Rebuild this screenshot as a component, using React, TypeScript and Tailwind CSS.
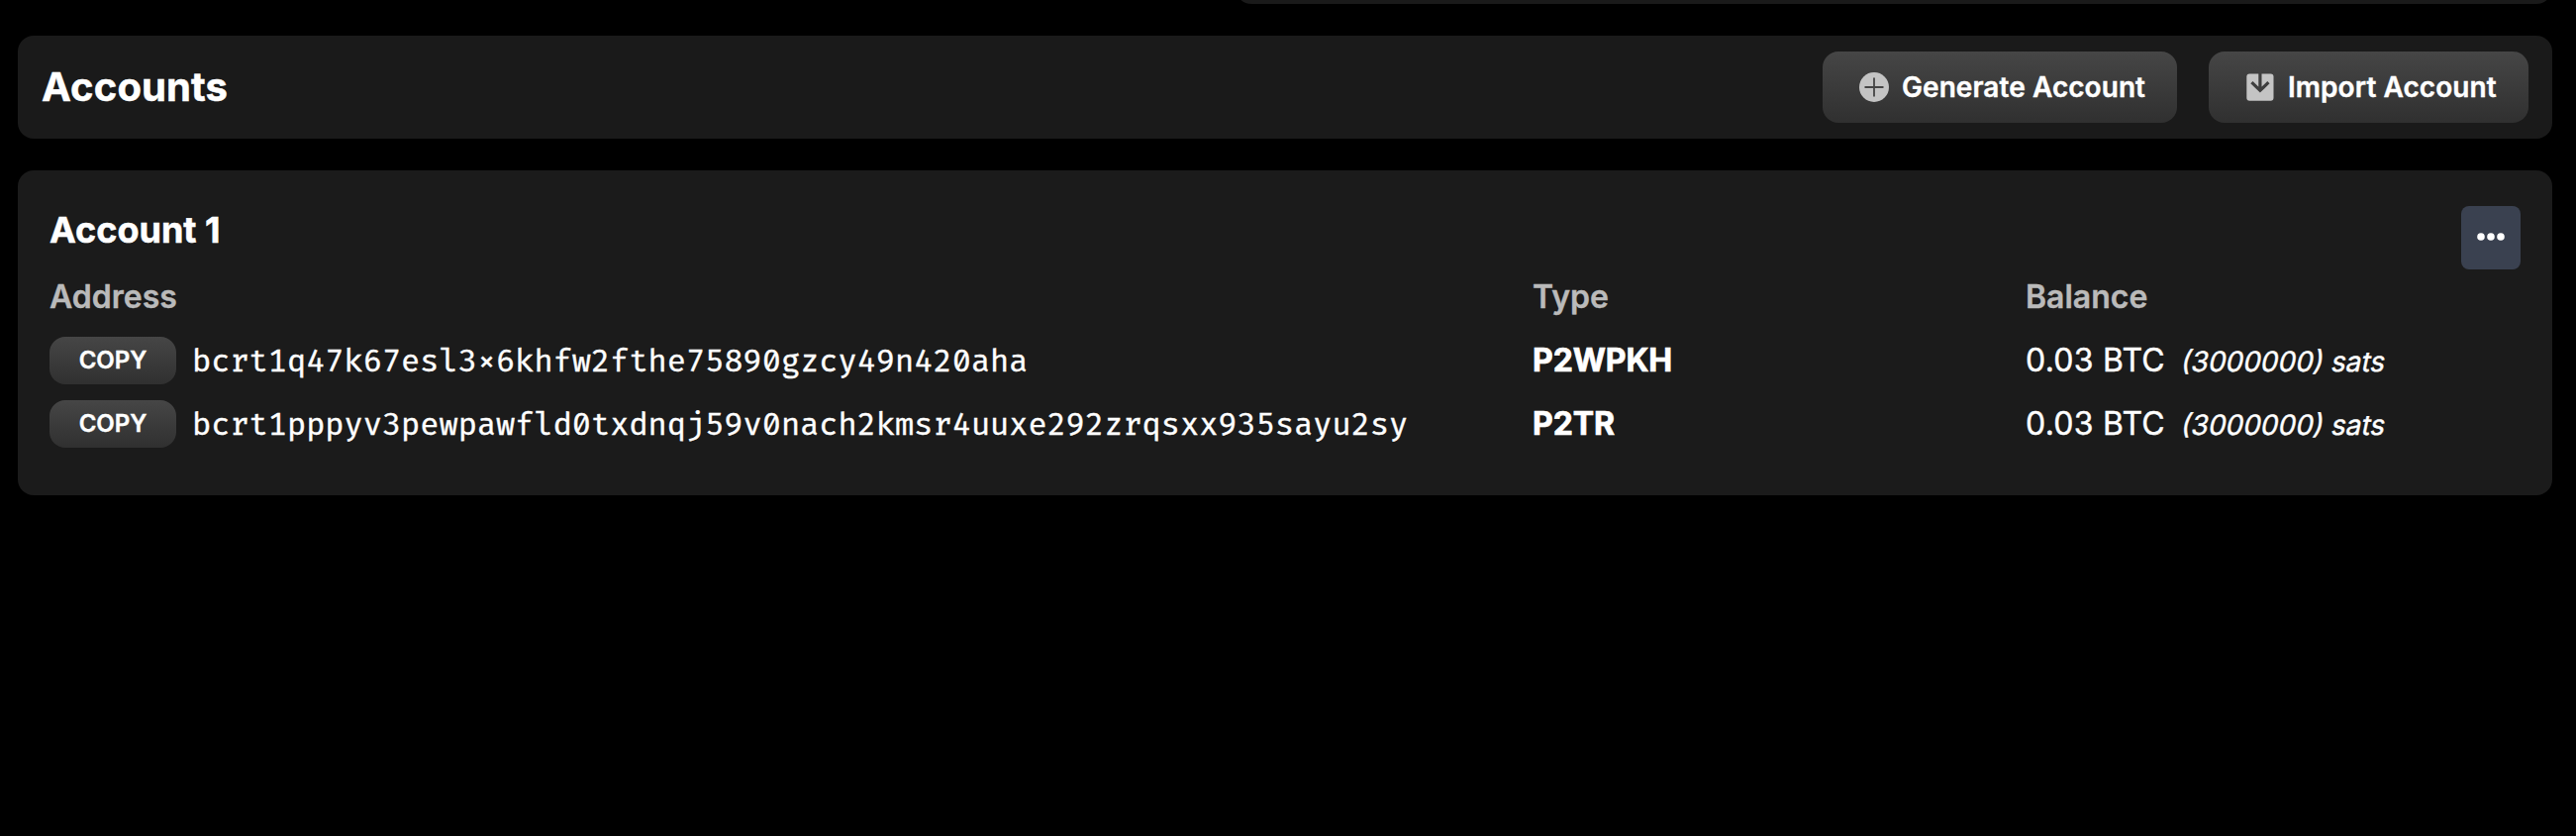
import React from "react";

const rows = [
  { address: "bcrt1q47k67esl3×6khfw2fthe75890gzcy49n420aha", type: "P2WPKH" },
  { address: "bcrt1pppyv3pewpawfld0txdnqj59v0nach2kmsr4uuxe292zrqsxx935sayu2sy", type: "P2TR" },
];

function PlusIcon() {
  return (
    <svg className="h-[30px] w-[30px] shrink-0" viewBox="0 0 30 30">
      <circle cx="15" cy="15" r="15" fill="#c4c4c4" />
      <path d="M15 5.5v19M5.5 15h19" stroke="#454545" strokeWidth="1.8" fill="none" />
    </svg>
  );
}

function ImportIcon() {
  return (
    <svg className="h-7 w-7 shrink-0" viewBox="0 0 28 28">
      <rect x="0.3" y="0.5" width="27.2" height="27.2" rx="3" fill="#c4c4c4" />
      <path d="M13.9 0v17M5.4 9.2l8.5 8.2l8.5-8.2" stroke="#3e3e3e" strokeWidth="3.2" fill="none" />
    </svg>
  );
}

export default function App() {
  return (
    <div className="flex h-[844px] w-[2602px] flex-col overflow-hidden bg-black pl-[18px] pr-6 font-['Inter',sans-serif] text-white">
      <div className="ml-[1230px] h-1 shrink-0 overflow-hidden">
        <div className="-mt-12 h-[52px] rounded-2xl bg-[#1a1a1a]" />
      </div>

      <header className="mt-8 flex h-[104px] shrink-0 items-center justify-between rounded-2xl bg-[#1a1a1a] px-6">
        <h1 className="text-[40px] font-bold leading-[56px] tracking-[0.003em] [-webkit-text-stroke:0.5px_#fff]">Accounts</h1>
        <div className="flex gap-8">
          <button className="flex h-[72px] w-[358px] items-center rounded-2xl bg-linear-to-b from-[#464646] to-[#303030] pl-[37px] text-[28px] font-semibold [-webkit-text-stroke:0.4px_#fff]">
            <PlusIcon />
            <span className="ml-[13px] whitespace-nowrap tracking-[0.002em]">Generate Account</span>
          </button>
          <button className="flex h-[72px] w-[323px] items-center rounded-2xl bg-linear-to-b from-[#464646] to-[#303030] pl-[38px] text-[28px] font-semibold [-webkit-text-stroke:0.4px_#fff]">
            <ImportIcon />
            <span className="ml-[14px] whitespace-nowrap tracking-[0.002em]">Import Account</span>
          </button>
        </div>
      </header>

      <section className="mt-8 flex h-[328px] shrink-0 flex-col rounded-2xl bg-[#1b1b1b] px-8 pt-9">
        <div className="flex h-16 justify-between">
          <h2 className="text-4xl font-bold leading-[48px] [-webkit-text-stroke:0.5px_#fff]">Account 1</h2>
          <button className="flex h-16 w-[60px] items-center justify-center rounded-lg bg-[#3a4150]">
            <svg className="-mt-0.5 h-2 w-7" viewBox="0 0 28 8">
              <circle cx="4" cy="4" r="3.8" fill="#fff" />
              <circle cx="14" cy="4" r="3.8" fill="#fff" />
              <circle cx="24" cy="4" r="3.8" fill="#fff" />
            </svg>
          </button>
        </div>
        <div className="mt-1 grid h-12 grid-cols-[1498px_498px_1fr] text-[32px] font-semibold leading-[48px] text-[#bababa] [-webkit-text-stroke:0.4px_#bababa]">
          <span>Address</span>
          <span>Type</span>
          <span>Balance</span>
        </div>
        <div className="mt-2 flex flex-col">
          {rows.map((row) => (
            <div
              key={row.type}
              className="grid h-16 grid-cols-[1498px_498px_1fr] items-center text-[32px] leading-[48px] [-webkit-text-stroke:0.4px_#fff]"
            >
              <div className="flex items-center gap-4">
                <button className="h-12 w-32 rounded-2xl bg-linear-to-b from-[#464646] to-[#303030] text-2xl font-semibold leading-[46px]">
                  COPY
                </button>
                <span className="pt-1 font-['Fira_Code','DejaVu_Sans_Mono',monospace] text-[31.2px]">{row.address}</span>
              </div>
              <span className="font-bold tracking-[-0.003em] [-webkit-text-stroke:0.7px_#fff]">{row.type}</span>
              <span className="flex items-baseline gap-[17px]">
                <span className="tracking-[0.008em]">0.03 BTC</span>
                <em className="-skew-x-12 text-[28px] not-italic">(3000000) sats</em>
              </span>
            </div>
          ))}
        </div>
      </section>
    </div>
  );
}
